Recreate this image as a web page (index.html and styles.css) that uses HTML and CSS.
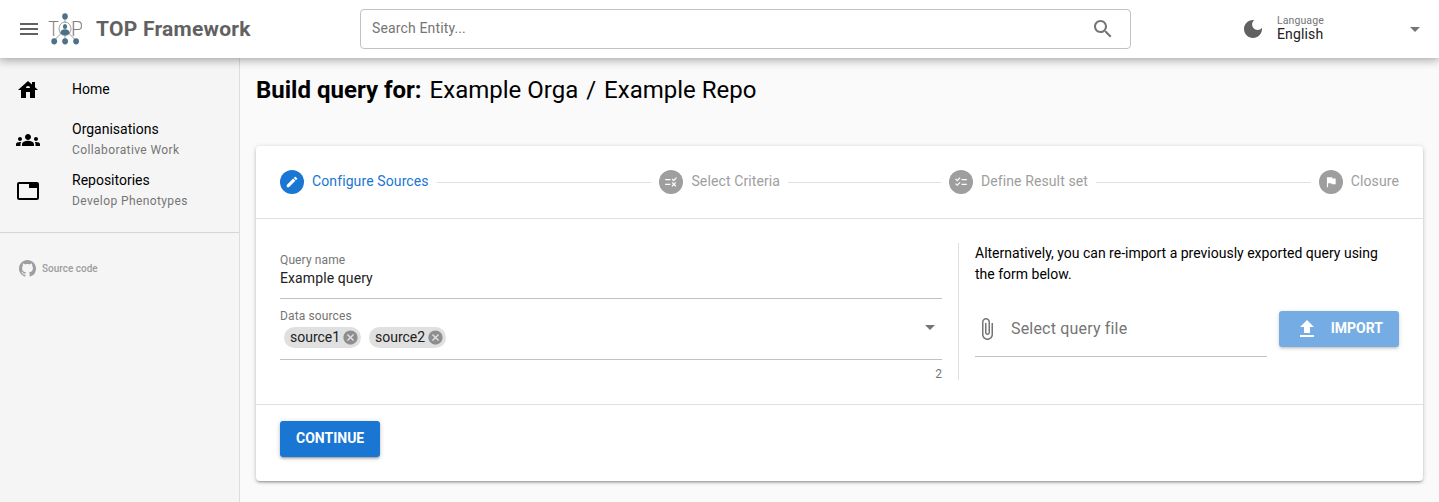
FILE: index.html
```html
<!DOCTYPE html>
<html lang="en">
<head>
<meta charset="utf-8">
<title>TOP Framework</title>
<link rel="stylesheet" href="styles.css">
</head>
<body>
<header class="header">
  <svg class="icon menu-icon" viewBox="0 0 24 24"><path d="M3 18h18v-2H3v2zm0-5h18v-2H3v2zm0-7v2h18V6H3z"/></svg>
  <svg class="logo" viewBox="0 0 34 34">
    <g class="logo-lines"><path d="M17 5v6M17 22v6M12.500 22l-6 6M21.500 22l6 6"/><ellipse cx="17" cy="16.800" rx="6" ry="6.800"/></g>
    <text class="logo-text" x="0.3" y="24" textLength="10.500" lengthAdjust="spacingAndGlyphs">T</text>
    <text class="logo-text" x="23" y="24" textLength="12" lengthAdjust="spacingAndGlyphs">P</text>
    <g class="logo-nodes"><ellipse cx="17" cy="4.400" rx="2.800" ry="3.100"/><ellipse cx="17" cy="14.500" rx="2.100" ry="2.500"/><path d="M12.300 21.500c0-3 2-4.300 4.700-4.300s4.700 1.300 4.700 4.300q-2 1.800-4.700 1.800t-4.700-1.800z"/><ellipse cx="6.200" cy="29.300" rx="2.900" ry="3.100"/><ellipse cx="17.100" cy="29.300" rx="2.900" ry="3.100"/><ellipse cx="28.100" cy="29.300" rx="2.900" ry="3.100"/></g>
  </svg>
  <div class="brand">TOP Framework</div>
  <div class="search"><span>Search Entity...</span>
    <svg class="icon" viewBox="0 0 24 24"><path d="M15.500 14h-.790l-.280-.270C15.410 12.590 16 11.110 16 9.500 16 5.910 13.090 3 9.500 3S3 5.910 3 9.500 5.910 16 9.500 16c1.610 0 3.090-.590 4.230-1.570l.270.280v.790l5 4.990L20.490 19l-4.990-5zm-6 0C7.010 14 5 11.990 5 9.500S7.010 5 9.500 5 14 7.010 14 9.500 11.990 14 9.500 14z"/></svg>
  </div>
  <svg class="icon moon" viewBox="0 0 24 24"><path d="M12 3c-4.970 0-9 4.030-9 9s4.030 9 9 9 9-4.030 9-9c0-.460-.040-.920-.100-1.360-.980 1.370-2.580 2.260-4.400 2.260-2.980 0-5.400-2.420-5.400-5.400 0-1.810.890-3.420 2.260-4.400-.440-.060-.900-.100-1.360-.100z"/></svg>
  <div class="language"><div class="language-label">Language</div><div class="language-value">English</div></div>
  <svg class="icon" viewBox="0 0 24 24"><path d="M7 10l5 5 5-5z"/></svg>
</header>
<div class="body">
  <nav class="drawer">
    <div class="nav-item nav-home">
      <svg class="icon" viewBox="0 0 24 24"><path d="M19 9.300V4h-3v2.600L12 3 2 12h3v8h5v-6h4v6h5v-8h3l-3-2.700zm-9 .700c0-1.100.900-2 2-2s2 .900 2 2h-4z"/></svg>
      <div class="nav-title">Home</div>
    </div>
    <div class="nav-item">
      <svg class="icon" viewBox="0 0 24 24"><path d="M12 12.750c1.630 0 3.070.390 4.240.900 1.080.480 1.760 1.560 1.760 2.730V18H6v-1.610c0-1.180.680-2.260 1.760-2.730 1.170-.520 2.610-.910 4.240-.910zM4 13c1.100 0 2-.900 2-2s-.900-2-2-2-2 .900-2 2 .900 2 2 2zm1.130 1.100c-.370-.060-.740-.100-1.130-.100-.990 0-1.930.210-2.780.580C.480 14.900 0 15.620 0 16.430V18h4.500v-1.610c0-.830.230-1.610.630-2.290zM20 13c1.100 0 2-.900 2-2s-.900-2-2-2-2 .900-2 2 .900 2 2 2zm4 3.430c0-.810-.480-1.530-1.220-1.850-.850-.370-1.790-.580-2.780-.580-.390 0-.760.040-1.130.100.400.680.630 1.460.630 2.290V18H24v-1.570zM12 6c1.660 0 3 1.340 3 3s-1.340 3-3 3-3-1.340-3-3 1.340-3 3-3z"/></svg>
      <div><div class="nav-title">Organisations</div><div class="nav-caption">Collaborative Work</div></div>
    </div>
    <div class="nav-item">
      <svg class="icon" viewBox="0 0 24 24"><path d="M21 3H3c-1.100 0-2 .900-2 2v14c0 1.100.900 2 2 2h18c1.100 0 2-.900 2-2V5c0-1.100-.900-2-2-2zm0 16H3V5h10v4h8v10z"/></svg>
      <div><div class="nav-title">Repositories</div><div class="nav-caption">Develop Phenotypes</div></div>
    </div>
    <div class="source">
      <svg class="github" viewBox="0 0 16 16"><path d="M8 0C3.580 0 0 3.580 0 8c0 3.540 2.290 6.530 5.470 7.590.400.070.550-.170.550-.380 0-.190-.010-.820-.010-1.490-2.010.370-2.530-.490-2.690-.940-.090-.230-.480-.940-.820-1.130-.280-.150-.680-.520-.010-.530.630-.010 1.080.580 1.230.820.720 1.210 1.870.870 2.330.660.070-.520.280-.870.510-1.070-1.780-.200-3.640-.890-3.640-3.950 0-.870.310-1.590.820-2.150-.080-.200-.360-1.020.080-2.120 0 0 .670-.210 2.200.820.640-.180 1.320-.270 2-.270s1.360.090 2 .270c1.530-1.040 2.200-.820 2.200-.820.440 1.100.160 1.920.080 2.120.510.560.820 1.270.820 2.150 0 3.070-1.870 3.750-3.650 3.950.290.250.540.730.540 1.480 0 1.070-.010 1.930-.010 2.200 0 .210.150.460.550.380A8.010 8.010 0 0 0 16 8c0-4.420-3.580-8-8-8z"/></svg>
      <span>Source code</span>
    </div>
  </nav>
  <main class="page">
    <h1 class="title"><b>Build query for:</b><span>Example Orga</span><span>/</span><span>Example Repo</span></h1>
    <section class="card">
      <div class="stepper">
        <div class="step active"><span class="dot"><svg viewBox="0 0 24 24"><path d="M3 17.250V21h3.750L17.810 9.940l-3.750-3.750L3 17.250zM20.710 7.040c.390-.390.390-1.020 0-1.410l-2.340-2.340c-.390-.390-1.020-.390-1.410 0l-1.830 1.830 3.750 3.750 1.830-1.830z"/></svg></span><span class="step-label">Configure Sources</span></div>
        <i class="line line-outer"></i>
        <div class="step"><span class="dot"><svg viewBox="0 0 24 24"><path d="M16.540 11L13 7.460l1.410-1.410 2.120 2.120 4.240-4.240 1.410 1.410L16.540 11zM11 7H2v2h9V7zm10 6.410L19.590 12 17 14.590 14.410 12 13 13.410 15.590 16 13 18.590 14.410 20 17 17.410 19.590 20 21 18.590 18.410 16 21 13.410zM11 15H2v2h9v-2z"/></svg></span><span class="step-label">Select Criteria</span></div>
        <i class="line"></i>
        <div class="step"><span class="dot"><svg viewBox="0 0 24 24"><path d="M22 7h-9v2h9V7zm0 8h-9v2h9v-2zM5.540 11L2 7.460l1.410-1.410 2.120 2.120 4.240-4.240 1.410 1.410L5.540 11zm0 8L2 15.460l1.410-1.410 2.120 2.120 4.240-4.240 1.410 1.410L5.540 19z"/></svg></span><span class="step-label">Define Result set</span></div>
        <i class="line line-outer"></i>
        <div class="step"><span class="dot"><svg viewBox="0 0 24 24"><path d="M14.400 6L14 4H5v17h2v-7h5.600l.4 2h7V6z"/></svg></span><span class="step-label">Closure</span></div>
      </div>
      <div class="content">
        <div class="fields">
          <div class="field name-field"><div class="label">Query name</div><div class="value">Example query</div></div>
          <div class="field source-field">
            <div>
              <div class="label">Data sources</div>
              <div class="chips">
                <span class="chip">source1<svg viewBox="0 0 24 24"><path d="M12 2C6.470 2 2 6.470 2 12s4.470 10 10 10 10-4.470 10-10S17.530 2 12 2zm5 13.590L15.590 17 12 13.410 8.410 17 7 15.590 10.590 12 7 8.410 8.410 7 12 10.590 15.590 7 17 8.410 13.410 12 17 15.590z"/></svg></span>
                <span class="chip">source2<svg viewBox="0 0 24 24"><path d="M12 2C6.470 2 2 6.470 2 12s4.470 10 10 10 10-4.470 10-10S17.530 2 12 2zm5 13.590L15.590 17 12 13.410 8.410 17 7 15.590 10.590 12 7 8.410 8.410 7 12 10.590 15.590 7 17 8.410 13.410 12 17 15.590z"/></svg></span>
              </div>
            </div>
            <svg class="icon" viewBox="0 0 24 24"><path d="M7 10l5 5 5-5z"/></svg>
          </div>
          <div class="counter">2</div>
        </div>
        <div class="import">
          <p class="hint">Alternatively, you can re-import a previously exported query using the form below.</p>
          <div class="import-row">
            <div class="file"><svg class="icon" viewBox="0 0 24 24"><path d="M16.500 6v11.500c0 2.210-1.790 4-4 4s-4-1.790-4-4V5c0-1.380 1.120-2.500 2.500-2.500s2.500 1.120 2.500 2.500v10.500c0 .550-.450 1-1 1s-1-.450-1-1V6H10v9.500c0 1.380 1.120 2.500 2.500 2.500s2.500-1.120 2.500-2.500V5c0-2.210-1.790-4-4-4S7 2.790 7 5v12.500c0 3.040 2.460 5.500 5.500 5.500s5.500-2.460 5.500-5.500V6h-1.500z"/></svg>Select query file</div>
            <button class="button import-button"><svg class="icon" viewBox="0 0 24 24"><path d="M5 20h14v-2H5v2zm0-10h4v6h6v-6h4l-7-7-7 7z"/></svg><span class="button-label">IMPORT</span></button>
          </div>
        </div>
      </div>
      <div class="actions"><button class="button"><span class="button-label">CONTINUE</span></button></div>
    </section>
  </main>
</div>
</body>
</html>
```
FILE: styles.css
```css
* { box-sizing: border-box; }
body {
  margin: 0;
  height: 502px;
  overflow: hidden;
  display: flex;
  flex-direction: column;
  background: #fafafa;
  color: #000;
  font: 14px/21px Roboto, "Liberation Sans", sans-serif;
}
svg { fill: currentColor; flex: none; display: block; }
.icon { width: 24px; height: 24px; }
.header {
  height: 58px;
  flex: none;
  display: flex;
  align-items: center;
  padding: 0 12px 0 17px;
  background: #fff;
  color: #757575;
  box-shadow: 0 0 10px 2px rgba(0,0,0,.2), 0 0 10px rgba(0,0,0,.24);
  z-index: 1;
}
.menu-icon { color: #616161; }
.logo { width: 34px; height: 34px; margin-left: 7px; }
.logo-lines { fill: none; stroke: #9e9e9e; stroke-width: 1; }
.logo-text { font: 300 20px Roboto, sans-serif; fill: #808080; }
.logo-nodes { fill: #4a7389; }
.brand {
  width: 265px;
  padding-left: 14px;
  font-size: 21px;
  font-weight: 700;
  letter-spacing: .25px;
  color: #616161;
}
.search {
  width: 771px;
  height: 40px;
  margin-left: 13px;
  padding: 0 15px 0 11px;
  display: flex;
  align-items: center;
  justify-content: space-between;
  border: 1px solid #c2c2c2;
  border-radius: 4px;
}
.search span { padding-bottom: 2px; letter-spacing: .14px; }
.moon { margin-left: 110px; color: #616161; }
.language { width: 126px; margin-left: 12px; padding-bottom: 2px; }
.language-label { font-size: 10.500px; line-height: 12px; letter-spacing: .1px; }
.language-value { line-height: 15px; letter-spacing: .15px; color: #212121; }
.body { display: flex; flex: 1; }
.drawer { width: 240px; flex: none; background: #f5f5f5; border-right: 1px solid #ddd; }
.nav-item { height: 51px; display: flex; align-items: center; padding: 0 16px; gap: 32px; }
.nav-home { height: 48px; padding-top: 15px; margin-bottom: 8px; }
.nav-title { line-height: 17px; }
.nav-caption { font-size: 12px; line-height: 16px; letter-spacing: .4px; color: #757575; margin-top: 4px; }
.source {
  display: flex;
  align-items: center;
  gap: 6px;
  margin-top: 16px;
  padding: 27px 19px;
  border-top: 1px solid #d6d6d6;
  color: #9e9e9e;
  font-size: 10px;
  line-height: 17px;
  font-weight: 500;
}
.github { width: 17px; height: 17px; }
.page { flex: 1; padding: 16px; }
.title {
  display: flex;
  gap: 8px;
  margin: 0 0 40px;
  font-size: 24px;
  line-height: 32px;
  font-weight: 400;
}
.card {
  height: 335px;
  border-radius: 4px;
  background: #fff;
  box-shadow: 0 1px 5px rgba(0,0,0,.2), 0 2px 2px rgba(0,0,0,.14), 0 3px 1px -2px rgba(0,0,0,.12);
}
.stepper { height: 73px; display: flex; align-items: center; padding: 0 24px; gap: 8px; border-bottom: 1px solid #e0e0e0; }
.step { display: flex; align-items: center; gap: 8px; color: #9e9e9e; line-height: 16px; letter-spacing: .11px; white-space: nowrap; }
.step-label { padding-bottom: 2px; }
.active { color: #1976d2; }
.dot { width: 24px; height: 24px; display: grid; place-items: center; border-radius: 50%; background: currentColor; }
.dot svg { width: 14px; height: 14px; fill: #fff; }
.line { flex: 153; height: 1px; background: #e0e0e0; }
.line-outer { flex: 215; }
.content { display: flex; padding: 24px; height: 185px; }
.fields { width: 662px; }
.field { border-bottom: 1px solid #c2c2c2; color: #212121; }
.name-field { height: 56px; padding-top: 9px; }
.value { letter-spacing: .1px; }
.source-field { height: 61px; padding-top: 9px; display: flex; justify-content: space-between; }
.source-field > .icon { margin-top: 7px; color: #757575; }
.label { font-size: 12px; line-height: 16px; letter-spacing: .12px; color: #757575; }
.chips { display: flex; gap: 8px; padding-left: 4px; margin-top: 3px; }
.chip { width: 77px; height: 21px; display: flex; align-items: center; justify-content: space-between; padding: 0 2px 0 6px; border-radius: 11px; background: #e0e0e0; }
.chip svg { width: 17px; height: 17px; color: #8e8e8e; }
.counter { text-align: right; font-size: 12px; line-height: 14px; padding-top: 7px; color: #757575; }
.import { width: 441px; margin-left: 16px; padding-left: 16px; border-left: 1px solid #e0e0e0; }
.hint { margin: 0; }
.import-row { display: flex; gap: 12px; margin-top: 16px; }
.file { width: 292px; height: 56px; display: flex; align-items: center; gap: 12px; border-bottom: 1px solid #c2c2c2; color: #757575; font-size: 16px; letter-spacing: .18px; }
.button {
  width: 100px;
  height: 36px;
  padding: 0 16px;
  display: flex;
  align-items: center;
  justify-content: space-between;
  border: 0;
  border-radius: 3px;
  background: #1976d2;
  color: #fff;
  font: 700 14px/24px Roboto, sans-serif;
  box-shadow: 0 1px 5px rgba(0,0,0,.2), 0 2px 2px rgba(0,0,0,.14), 0 3px 1px -2px rgba(0,0,0,.12);
}
.button-label { padding-bottom: 2px; }
.import-button { width: 120px; margin-top: 10px; opacity: .6; }
.actions { padding: 16px 24px; border-top: 1px solid #e0e0e0; }
```
